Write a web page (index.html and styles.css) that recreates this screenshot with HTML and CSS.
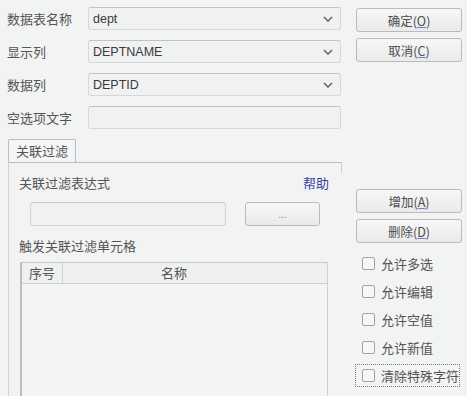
FILE: index.html
```html
<!DOCTYPE html>
<html>
<head>
<meta charset="utf-8">
<link rel="stylesheet" href="styles.css">
</head>
<body>
<div class="left">
  <div class="row"><span class="label">数据表名称</span><div class="combo"><span>dept</span><svg class="chev" viewBox="0 0 10 6" width="10" height="6"><path d="M1 1 L5 5 L9 1" fill="none" stroke="#666" stroke-width="1.6"/></svg></div></div>
  <div class="row"><span class="label">显示列</span><div class="combo"><span>DEPTNAME</span><svg class="chev" viewBox="0 0 10 6" width="10" height="6"><path d="M1 1 L5 5 L9 1" fill="none" stroke="#666" stroke-width="1.6"/></svg></div></div>
  <div class="row"><span class="label">数据列</span><div class="combo"><span>DEPTID</span><svg class="chev" viewBox="0 0 10 6" width="10" height="6"><path d="M1 1 L5 5 L9 1" fill="none" stroke="#666" stroke-width="1.6"/></svg></div></div>
  <div class="row"><span class="label">空选项文字</span><div class="combo"></div></div>

  <div class="tab">关联过滤</div>
  <div class="panel">
    <div class="exprhead"><span>关联过滤表达式</span><span class="help">帮助</span></div>
    <div class="exprrow"><div class="input"></div><div class="btn dots">...</div></div>
    <div class="cellhead">触发关联过滤单元格</div>
    <div class="table">
      <div class="thead"><div class="th num">序号</div><div class="th name">名称</div></div>
    </div>
  </div>
</div>
<div class="right">
  <div class="btn big">确定(<u>O</u>)</div>
  <div class="btn big second">取消(<u>C</u>)</div>
  <div class="btn big add">增加(<u>A</u>)</div>
  <div class="btn big second">删除(<u>D</u>)</div>
  <div class="checks">
    <div class="chk"><span class="box"></span>允许多选</div>
    <div class="chk"><span class="box"></span>允许编辑</div>
    <div class="chk"><span class="box"></span>允许空值</div>
    <div class="chk"><span class="box"></span>允许新值</div>
    <div class="chk focus"><span class="box"></span>清除特殊字符</div>
  </div>
</div>
</body>
</html>
```

FILE: styles.css
```css
html, body {
  margin: 0;
  padding: 0;
}
body {
  width: 467px;
  height: 396px;
  overflow: hidden;
  background: #f2f3f3;
  display: flex;
  font-family: "Noto Sans CJK SC", "Noto Sans", sans-serif;
  font-size: 13px;
  color: #555;
}
.left {
  width: 345px;
  padding-top: 7px;
  box-sizing: border-box;
}
.row {
  display: flex;
  align-items: center;
  height: 23px;
  margin-bottom: 10px;
}
.label {
  width: 88px;
  padding-left: 7px;
  box-sizing: border-box;
  line-height: 23px;
}
.combo {
  width: 253px;
  height: 23px;
  box-sizing: border-box;
  border: 1px solid #d6d7d7;
  border-top-color: #c2c3c3;
  border-radius: 3px;
  background: #f0f1f1;
  display: flex;
  align-items: center;
  justify-content: space-between;
  padding: 0 7px 0 4px;
  font-family: "Liberation Sans", Arial, sans-serif;
  font-size: 12.5px;
  color: #3a3a3a;
}
.chev { display: block; }
.tab {
  margin-top: 1px;
  margin-left: 8px;
  width: 68px;
  height: 23px;
  box-sizing: border-box;
  border: 1px solid #bcbcbc;
  border-bottom: none;
  border-radius: 2px 2px 0 0;
  background: #f4f5f6;
  padding-left: 7px;
  line-height: 22px;
}
.panel {
  position: relative;
  margin-left: 8px;
  width: 334px;
  height: 240px;
  box-sizing: border-box;
  border-top: 1px solid #bdbdbd;
  border-left: 1px solid #d2d2d2;
  padding: 0 0 0 10px;
}
.panel::after {
  content: "";
  position: absolute;
  right: 0;
  top: 0;
  width: 1px;
  height: 10px;
  background: #cfcfcf;
}
.exprhead {
  display: flex;
  justify-content: space-between;
  width: 310px;
  height: 20px;
  margin-top: 10px;
  line-height: 20px;
}
.help {
  color: #3b3fa8;
}
.exprrow {
  display: flex;
  margin-top: 9px;
  margin-left: 11px;
  height: 24px;
}
.input {
  width: 196px;
  height: 24px;
  box-sizing: border-box;
  border: 1px solid #d2d3d3;
  border-top-color: #c4c5c5;
  border-radius: 3px;
  background: #f0f1f1;
}
.btn {
  box-sizing: border-box;
  border: 1px solid #b9baba;
  border-radius: 3px;
  background: linear-gradient(#f7f7f7, #e9eaea);
  display: flex;
  align-items: center;
  justify-content: center;
  color: #4d4d4d;
}
.dots {
  margin-left: 19px;
  width: 75px;
  height: 24px;
  font-family: "Liberation Sans", Arial, sans-serif;
  font-size: 10px;
  color: #888;
}
.cellhead {
  margin-top: 10px;
  height: 20px;
  line-height: 20px;
}
.table {
  margin-top: 6px;
  margin-left: 1px;
  width: 308px;
  height: 140px;
  box-sizing: border-box;
  border-top: 1px solid #c8c8c8;
  border-left: 2px solid #bdbdbd;
  border-right: 1px solid #d0d0d0;
  background: #f3f4f4;
}
.thead {
  display: flex;
  height: 20px;
  border-bottom: 1px solid #cfd0d0;
  background: #eef0f1;
  line-height: 20px;
}
.th.num {
  width: 41px;
  padding-left: 7px;
  box-sizing: border-box;
  border-right: 1px solid #d0d0d0;
}
.th.name {
  flex: 1;
  padding-left: 98px;
}
.right {
  width: 122px;
  padding-top: 8px;
  padding-left: 11px;
  box-sizing: border-box;
}
.big {
  width: 106px;
  height: 24px;
  font-size: 12.5px;
}
.big u {
  text-decoration-color: #7a7ad0;
}
.second { margin-top: 6px; }
.add { margin-top: 127px; }
.checks {
  margin-top: 10px;
}
.chk {
  display: flex;
  align-items: center;
  height: 20px;
  margin-bottom: 8px;
  padding-left: 6px;
  width: 103px;
  box-sizing: border-box;
}
.box {
  width: 13px;
  height: 13px;
  box-sizing: border-box;
  border: 1px solid #a3a3a3;
  border-radius: 2px;
  background: #f7f7f7;
  margin-right: 6px;
}
.chk.focus {
  outline: 1px dotted #777;
  outline-offset: 0;
  height: 21px;
  margin-top: 1px;
}
```
